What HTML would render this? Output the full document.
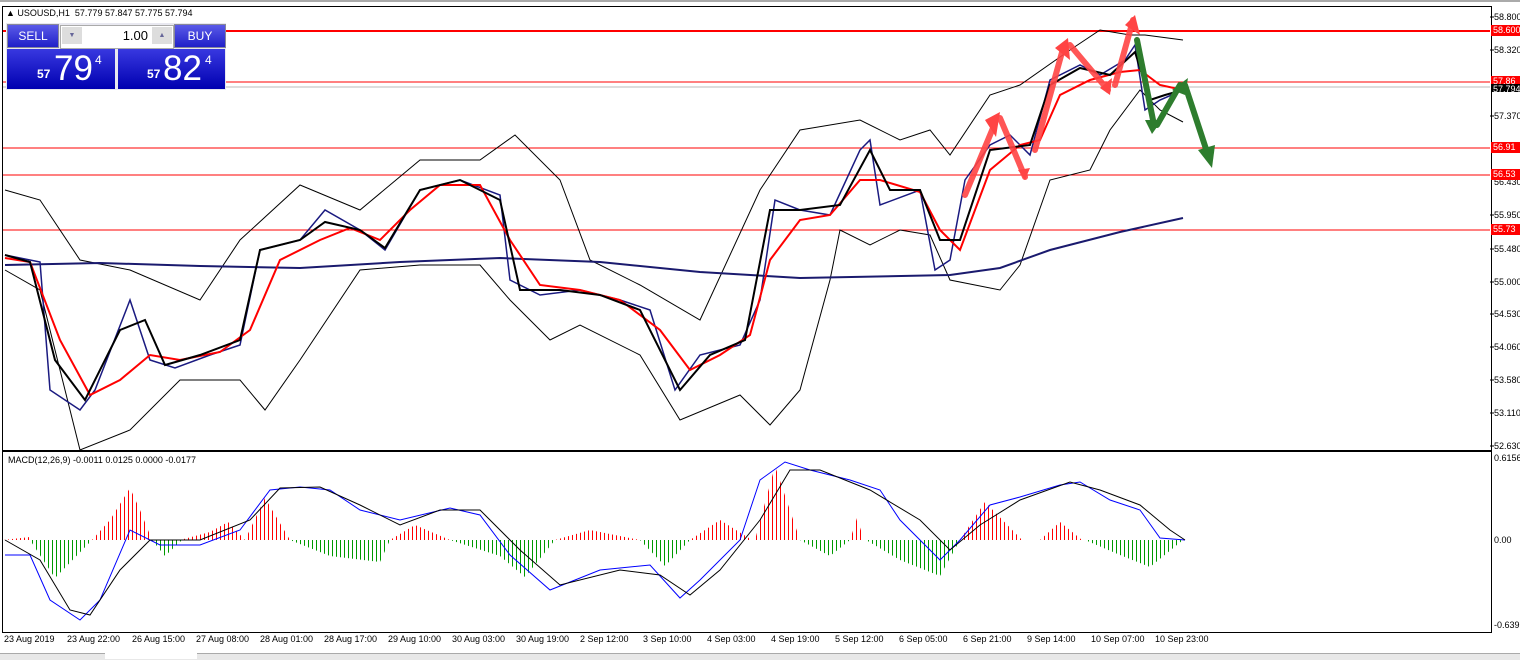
<!DOCTYPE html>
<html><head><style>
body{margin:0;width:1520px;height:659px;overflow:hidden;background:#fff;font-family:"Liberation Sans",sans-serif;position:relative}
.ax{position:absolute;font-size:9px;color:#000;left:1494px}
.tag{position:absolute;left:1491px;background:#f00;color:#fff;font-size:9px;padding:0 2px;width:26px;height:11px;line-height:11px}
.bl{position:absolute;top:634px;font-size:9px}
.btn{position:absolute;background:linear-gradient(#5a5ae8,#2020c8);color:#fff;font-size:12px;text-align:center;line-height:22px;border:1px solid #889}
.pb{position:absolute;background:linear-gradient(#3838e0,#0000b0);color:#fff}
</style></head><body>
<div style="position:absolute;left:0;top:0;width:1520px;height:2px;background:#aaa"></div>
<div style="position:absolute;left:2px;top:6px;width:1488px;height:443px;border:1px solid #000"></div>
<div style="position:absolute;left:2px;top:451px;width:1488px;height:180px;border:1px solid #000"></div>
<div style="position:absolute;left:0;top:653px;width:1520px;height:6px;background:#e8e8e8;border-top:1px solid #aaa"></div>
<div style="position:absolute;left:105px;top:653px;width:92px;height:6px;background:#fff"></div>
<svg width="1520" height="659" style="position:absolute;left:0;top:0">
<defs>
<clipPath id="cr"><path d="M3,540 L30,537 L30,540 Z M92,540 L110,520 L130,488 L140,510 L152,540 Z M180,540 L210,532 L228,522 L245,540 Z M245,540 L265,498 L290,540 Z M390,540 L415,525 L450,540 Z M555,540 L590,530 L640,540 Z M690,540 L720,520 L752,540 Z M755,540 L775,466 L800,540 Z M850,540 L857,518 L864,540 Z M960,540 L985,502 L1022,540 Z M1040,540 L1060,522 L1082,540 Z"/></clipPath>
<clipPath id="cg"><path d="M30,540 L55,578 L92,540 Z M152,540 L165,556 L182,540 Z M290,540 L330,556 L380,562 L390,540 Z M450,540 L500,556 L525,577 L555,540 Z M640,540 L665,566 L690,540 Z M800,540 L830,556 L850,540 Z M866,540 L900,560 L940,576 L960,540 Z M1085,540 L1120,555 L1150,567 L1183,540 Z"/></clipPath>
</defs>
<g stroke="#f00" fill="none">
<line x1="3" y1="31" x2="1490" y2="31" stroke-width="2"/>
<line x1="3" y1="82" x2="1490" y2="82"/>
<line x1="3" y1="148" x2="1490" y2="148"/>
<line x1="3" y1="175" x2="1490" y2="175"/>
<line x1="3" y1="230" x2="1490" y2="230"/>
</g>
<line x1="3" y1="87" x2="1490" y2="87" stroke="#bbb"/>
<polyline fill="none" stroke="#000" stroke-width="1" points="5,190 40,200 80,260 130,270 200,300 240,240 300,185 360,210 420,160 480,160 515,135 560,180 590,260 640,285 700,320 760,190 800,130 860,120 900,140 930,130 950,155 990,95 1020,85 1070,50 1100,30 1130,35 1145,35 1183,40"/>
<polyline fill="none" stroke="#000" stroke-width="1" points="5,270 40,290 80,450 130,430 180,380 240,380 265,410 300,360 360,270 420,265 480,265 510,300 550,340 580,325 640,355 680,420 740,395 770,425 800,390 830,280 840,230 870,245 900,230 930,235 950,280 1000,290 1020,265 1050,180 1090,170 1110,130 1140,90 1160,110 1183,122"/>
<polyline fill="none" stroke="#1a1a6e" stroke-width="2" points="5,265 100,263 200,266 300,268 400,262 500,258 600,262 700,272 800,278 950,275 1000,268 1050,250 1120,232 1183,218"/>
<polyline fill="none" stroke="#1a1a80" stroke-width="1.5" points="5,255 40,262 50,390 80,410 95,390 130,300 150,360 175,368 210,355 240,345 260,250 300,240 325,210 360,230 385,250 420,190 460,180 500,195 510,280 540,295 580,290 620,300 650,310 675,390 700,355 740,345 760,300 775,200 800,210 830,215 860,150 870,140 880,205 920,190 935,270 950,260 965,180 990,145 1010,135 1030,155 1050,80 1080,65 1100,75 1125,60 1135,45 1145,110 1160,100 1183,90"/>
<polyline fill="none" stroke="#f00" stroke-width="2" points="5,258 30,262 60,340 90,395 120,380 150,355 180,360 220,352 250,330 280,260 320,240 350,228 380,240 410,210 440,185 480,185 510,240 540,285 580,290 620,300 660,330 690,370 720,355 750,335 770,260 800,220 830,215 860,180 880,180 920,192 940,230 960,250 990,170 1020,145 1040,140 1060,95 1090,80 1120,72 1140,70 1160,85 1183,90"/>
<polyline fill="none" stroke="#000" stroke-width="2" points="5,255 30,262 55,360 85,400 120,330 145,320 165,365 200,355 240,340 260,250 300,240 325,222 360,230 385,248 420,190 460,180 500,200 520,290 560,290 600,295 640,310 680,390 710,355 745,340 770,210 800,210 840,205 870,150 890,190 920,190 940,240 960,240 990,150 1030,145 1050,85 1080,68 1110,75 1135,52 1150,100 1165,95 1183,90"/>
<g stroke-linecap="round" fill="none">
<g stroke="#f44" stroke-width="6" opacity=".9">
<polyline points="965,195 993,128"/><polyline points="1000,118 1025,177"/><polyline points="1035,150 1064,45"/><polyline points="1070,45 1108,90"/><polyline points="1115,85 1133,20"/>
</g>
<g stroke="#2e7d2e" stroke-width="6">
<polyline points="1137,40 1154,125"/><polyline points="1157,125 1180,85"/><polyline points="1185,85 1208,155"/>
</g>
</g>
<g fill="#f44"><polygon points="985,120 1000,112 996,137"/><polygon points="1018,170 1030,168 1025,180"/><polygon points="1055,48 1068,38 1070,60"/><polygon points="1100,88 1112,78 1110,95"/><polygon points="1125,25 1135,15 1140,35"/></g>
<g fill="#2e7d2e"><polygon points="1145,120 1162,120 1152,134"/><polygon points="1172,90 1188,78 1185,95"/><polygon points="1198,150 1215,145 1212,168"/></g>
<line x1="0" y1="540" x2="1200" y2="540" stroke="#f00" stroke-width="200" stroke-dasharray="1 3" clip-path="url(#cr)"/>
<line x1="0" y1="540" x2="1200" y2="540" stroke="#090" stroke-width="200" stroke-dasharray="1 3" clip-path="url(#cg)"/>
<polyline fill="none" stroke="#00f" stroke-width="1" points="5,555 30,555 50,600 80,620 100,600 130,530 160,545 200,545 240,530 270,490 300,487 330,490 360,510 400,520 450,508 480,515 510,555 550,590 600,570 650,565 680,598 700,580 740,540 760,480 785,462 810,470 850,480 880,490 900,520 940,560 960,540 990,505 1020,497 1060,485 1080,482 1110,500 1140,510 1160,538 1185,540"/>
<polyline fill="none" stroke="#000" stroke-width="1" points="5,540 40,560 70,610 90,615 120,570 150,540 200,540 250,520 280,488 320,487 360,505 400,525 440,510 480,510 520,550 560,585 620,570 660,575 690,595 720,570 760,520 790,470 820,470 870,490 920,520 950,550 980,525 1020,500 1070,482 1100,490 1140,505 1170,530 1185,540"/>
<g stroke="#000"><line x1="1490" y1="17" x2="1494" y2="17"/><line x1="1490" y1="50" x2="1494" y2="50"/><line x1="1490" y1="116" x2="1494" y2="116"/><line x1="1490" y1="215" x2="1494" y2="215"/><line x1="1490" y1="249" x2="1494" y2="249"/><line x1="1490" y1="282" x2="1494" y2="282"/><line x1="1490" y1="314" x2="1494" y2="314"/><line x1="1490" y1="347" x2="1494" y2="347"/><line x1="1490" y1="380" x2="1494" y2="380"/><line x1="1490" y1="413" x2="1494" y2="413"/><line x1="1490" y1="446" x2="1494" y2="446"/></g>
</svg>
<div style="position:absolute;left:6px;top:8px;font-size:9px">▲ USOUSD,H1&nbsp; 57.779 57.847 57.775 57.794</div>
<div style="position:absolute;left:8px;top:455px;font-size:9px">MACD(12,26,9) -0.0011 0.0125 0.0000 -0.0177</div>
<div style="position:absolute;left:6px;top:23px;width:220px;height:67px;background:#e8e8f0"></div>
<div class="btn" style="left:7px;top:24px;width:50px;height:22px">SELL</div>
<div class="btn" style="left:174px;top:24px;width:50px;height:22px">BUY</div>
<div style="position:absolute;left:60px;top:25px;width:112px;height:22px;background:#fff;border:1px solid #aaa"></div>
<div style="position:absolute;left:62px;top:27px;width:20px;height:17px;background:#ddd;font-size:7px;text-align:center;line-height:17px;color:#669">▼</div>
<div style="position:absolute;left:152px;top:27px;width:20px;height:17px;background:#ddd;font-size:7px;text-align:center;line-height:17px;color:#669">▲</div>
<div style="position:absolute;left:100px;top:28px;width:48px;font-size:13px;text-align:right">1.00</div>
<div class="pb" style="left:7px;top:49px;width:108px;height:40px"><span style="position:absolute;left:30px;top:18px;font-size:12px;font-weight:bold">57</span><span style="position:absolute;left:47px;top:0px;font-size:35px">79</span><span style="position:absolute;left:88px;top:4px;font-size:12px">4</span></div>
<div class="pb" style="left:118px;top:49px;width:107px;height:40px"><span style="position:absolute;left:29px;top:18px;font-size:12px;font-weight:bold">57</span><span style="position:absolute;left:45px;top:0px;font-size:35px">82</span><span style="position:absolute;left:87px;top:4px;font-size:12px">4</span></div>
<div class="ax" style="top:12px">58.800</div>
<div class="tag" style="top:25px">58.600</div>
<div class="ax" style="top:45px">58.320</div>
<div class="tag" style="top:76px">57.86</div>
<div class="tag" style="top:84px;background:#000;height:8px">57.794</div>
<div class="ax" style="top:111px">57.370</div>
<div class="tag" style="top:142px">56.91</div>
<div class="ax" style="top:177px">56.430</div>
<div class="tag" style="top:169px">56.53</div>
<div class="ax" style="top:210px">55.950</div>
<div class="tag" style="top:224px">55.73</div>
<div class="ax" style="top:244px">55.480</div>
<div class="ax" style="top:277px">55.000</div>
<div class="ax" style="top:309px">54.530</div>
<div class="ax" style="top:342px">54.060</div>
<div class="ax" style="top:375px">53.580</div>
<div class="ax" style="top:408px">53.110</div>
<div class="ax" style="top:441px">52.630</div>
<div class="ax" style="top:453px">0.6156</div>
<div class="ax" style="top:535px">0.00</div>
<div class="ax" style="top:620px">-0.639</div>
<div class="bl" style="left:4px">23 Aug 2019</div>
<div class="bl" style="left:67px">23 Aug 22:00</div>
<div class="bl" style="left:132px">26 Aug 15:00</div>
<div class="bl" style="left:196px">27 Aug 08:00</div>
<div class="bl" style="left:260px">28 Aug 01:00</div>
<div class="bl" style="left:324px">28 Aug 17:00</div>
<div class="bl" style="left:388px">29 Aug 10:00</div>
<div class="bl" style="left:452px">30 Aug 03:00</div>
<div class="bl" style="left:516px">30 Aug 19:00</div>
<div class="bl" style="left:580px">2 Sep 12:00</div>
<div class="bl" style="left:643px">3 Sep 10:00</div>
<div class="bl" style="left:707px">4 Sep 03:00</div>
<div class="bl" style="left:771px">4 Sep 19:00</div>
<div class="bl" style="left:835px">5 Sep 12:00</div>
<div class="bl" style="left:899px">6 Sep 05:00</div>
<div class="bl" style="left:963px">6 Sep 21:00</div>
<div class="bl" style="left:1027px">9 Sep 14:00</div>
<div class="bl" style="left:1091px">10 Sep 07:00</div>
<div class="bl" style="left:1155px">10 Sep 23:00</div>
</body></html>
